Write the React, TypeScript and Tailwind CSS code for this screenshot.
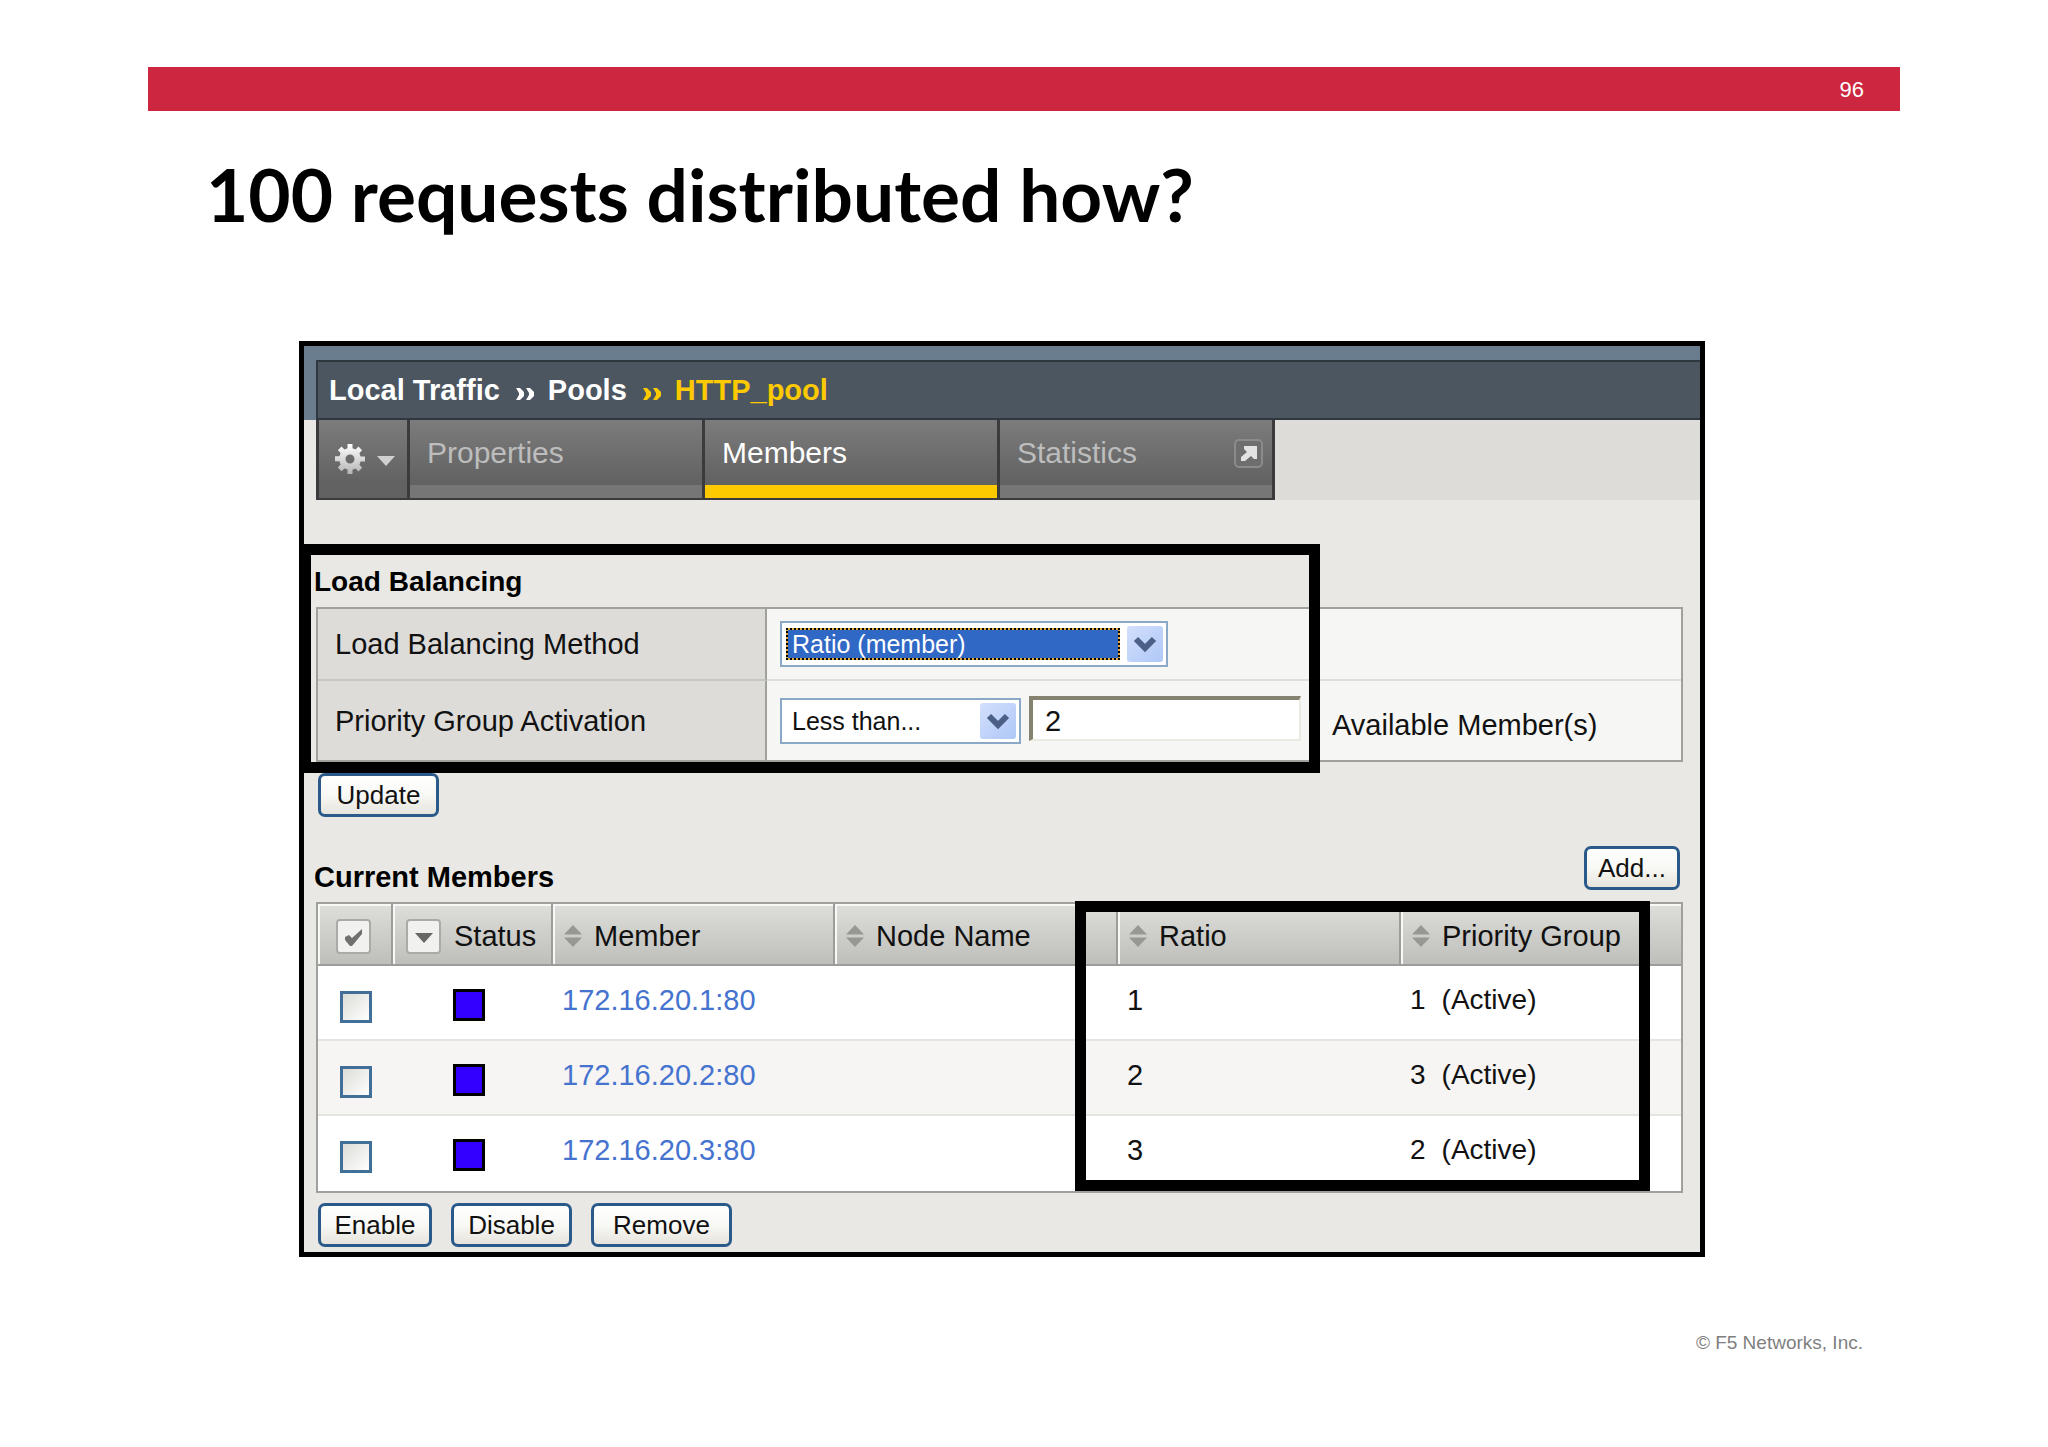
import React, { useState } from 'react';

type Member = {
  address: string;
  ratio: number;
  priority: number;
};

const members: Member[] = [
  { address: '172.16.20.1:80', ratio: 1, priority: 1 },
  { address: '172.16.20.2:80', ratio: 2, priority: 3 },
  { address: '172.16.20.3:80', ratio: 3, priority: 2 }
];

const Chevrons = ({ className }: { className: string }) => (
  <svg viewBox="0 0 18 12" className={`w-[18px] h-3 mt-2 ${className}`} aria-hidden="true">
    <path d="M0 0h4l4 4v4l-4 4H0l3-5V5zM10 0h4l4 4v4l-4 4h-4l3-5V5z" fill="currentColor" />
  </svg>
);

const GearIcon = () => (
  <svg viewBox="0 0 30 30" className="w-[30px] h-[30px]" aria-hidden="true">
    <defs>
      <linearGradient id="gear" x1="0" y1="0" x2="0" y2="1">
        <stop offset="0" stopColor="#ffffff" />
        <stop offset="1" stopColor="#b4b4b4" />
      </linearGradient>
    </defs>
    <path
      fill="url(#gear)"
      fillRule="evenodd"
      d="M12.5 0h5v4.2l3 1.200 3-2.800 3.600 3.600-2.700 3.100 1.200 3.200H30v5h-4.400l-1.200 3.200 2.700 3.100-3.600 3.600-3-2.800-3 1.200V30h-5v-4.400l-3-1.200-3 2.800-3.600-3.600 2.700-3.100-1.200-3.200H0v-5h4.400l1.200-3.200L2.900 6.200l3.600-3.600 3 2.800 3-1.200zM15 10.500a4.500 4.500 0 1 0 0 9 4.500 4.500 0 1 0 0-9z"
    />
  </svg>
);

const SortIcon = () => (
  <svg viewBox="0 0 18 22" className="w-[18px] h-[22px] shrink-0" aria-hidden="true">
    <path d="M9 0l9 9.500H0zM0 12.500h18L9 22z" fill="#979793" />
  </svg>
);

const DropArrow = () => (
  <svg viewBox="0 0 36 36" className="w-9 h-9 shrink-0" aria-hidden="true">
    <defs>
      <linearGradient id="drop" x1="0" y1="0" x2="1" y2="1">
        <stop offset="0" stopColor="#d3dffc" />
        <stop offset="1" stopColor="#aec8f7" />
      </linearGradient>
    </defs>
    <rect width="36" height="36" rx="3" fill="url(#drop)" />
    <path d="M9 13l9 9 9-9" fill="none" stroke="#4a6085" strokeWidth="6" />
  </svg>
);

const Button = ({ width, children }: { width: string; children: React.ReactNode }) => (
  <button
    type="button"
    className={`${width} h-11 rounded-[7px] border-[3px] border-[#2a5a8a] bg-linear-to-b from-white via-[#f8f8f5] to-[#e6e4dc] text-[26px] leading-8 text-[#111]`}
  >
    {children}
  </button>
);

const Tab = ({ label, active, width, icon }: { label: string; active?: boolean; width: string; icon?: React.ReactNode }) => (
  <a
    href="#"
    aria-current={active ? 'page' : undefined}
    className={`${width} flex flex-col justify-between border-r-[3px] border-b-2 border-[#3b3b3d] bg-linear-to-b from-[#7c7c7c] to-[#626262] to-80%`}
  >
    <span
      className={`flex items-center justify-between pt-[17px] pl-[17px] pr-[9px] text-[30px] leading-8 ${
        active ? 'text-white' : 'text-[#bdbdbd]'
      }`}
    >
      {label}
      {icon}
    </span>
    <span className={`h-[13px] ${active ? 'bg-[#fdca00]' : 'bg-[#767676]'}`} />
  </a>
);

const headCell = 'h-[62px] border-b-2 border-[#9c9c99] p-0 pt-1 font-normal shadow-[inset_2px_2px_0_#f8f8f6]';

export default function App() {
  const [method, setMethod] = useState('Ratio (member)');
  const [activation, setActivation] = useState('Less than...');
  const [available, setAvailable] = useState('2');

  return (
    <div className="bg-white pt-[67px] font-['Liberation_Sans',Arial,sans-serif] text-[#111]">
      <header className="mx-[148px] h-11 flex items-center justify-end bg-[#cd2641] pt-px pr-9 text-[22px] leading-8 text-white">
        96
      </header>

      <h1 className="pt-[38px] pl-[206px] font-['Lato',sans-serif] text-[73px] leading-[90px] font-bold text-black">
        100 requests distributed how?
      </h1>

      <main className="ml-[299px] mr-[343px] mt-[102px] border-[5px] border-black bg-[#e9e8e4]">
        <div className="bg-[#6a7d8e] pt-[14px] pl-3">
          <div className="flex h-[60px] items-center border-2 border-r-0 border-[#30383f] bg-[#4b5661] pl-[11px] text-[29px] leading-8 font-bold text-white">
            Local Traffic
            <Chevrons className="ml-4 mr-[14px]" />
            Pools
            <Chevrons className="ml-4 mr-[14px] text-[#fdca00]" />
            <span className="text-[#fdca00]">HTTP_pool</span>
          </div>
        </div>

        <nav className="ml-3 flex h-20 bg-[#dddcd8]">
          <button
            type="button"
            aria-label="Options"
            className="flex w-[94px] items-center gap-3 border-x-[3px] border-b-2 border-[#3b3b3d] bg-linear-to-b from-[#7c7c7c] to-[#626262] to-80% pl-4"
          >
            <GearIcon />
            <svg viewBox="0 0 18 10" className="mt-1 h-[10px] w-[18px]" aria-hidden="true">
              <path d="M0 0h18L9 10z" fill="#d0d0d0" />
            </svg>
          </button>
          <Tab label="Properties" width="w-[295px]" />
          <Tab label="Members" width="w-[295px]" active />
          <Tab
            label="Statistics"
            width="w-[275px]"
            icon={
              <svg viewBox="0 0 29 29" className="h-[29px] w-[29px]" aria-hidden="true">
                <rect x="1" y="1" width="27" height="27" rx="4" fill="#6e6e6e" stroke="#8b8b8b" strokeWidth="2" />
                <path d="M10 7h13v13h-3l-3-3-6 5H7v-4l6-5-3-3z" fill="#e2e2e2" />
              </svg>
            }
          />
        </nav>

        <section className="relative pl-3 pr-[17px] pt-[66px]">
          <h2 className="-ml-[2px] text-[28px] leading-8 font-bold text-black">Load Balancing</h2>
          <div className="mt-[9px] border-2 border-[#a0a09d] bg-[#f6f6f4] text-[29px] leading-8">
            <div className="flex h-[72px]">
              <label
                htmlFor="method"
                className="flex w-[449px] items-center border-r-2 border-b-2 border-r-[#a0a09d] border-b-[#c6c6c2] bg-[#dddcd8] pl-[17px]"
              >
                Load Balancing Method
              </label>
              <div className="flex flex-1 items-center border-b-2 border-[#dededb] pl-[13px]">
                <div className="flex h-[46px] w-[388px] items-center gap-[7px] border-2 border-[#8ba9c6] bg-white pl-1 pr-[3px]">
                  <span className="flex flex-1 bg-[#e0a845]">
                    <select
                      id="method"
                      value={method}
                      onChange={e => setMethod(e.target.value)}
                      className="h-8 w-full appearance-none border-2 border-dotted border-black bg-[#3068c6] bg-clip-padding pl-1 text-[25px] leading-7 text-white outline-none"
                    >
                      <option>Ratio (member)</option>
                      <option>Round Robin</option>
                    </select>
                  </span>
                  <DropArrow />
                </div>
              </div>
            </div>
            <div className="flex h-[79px]">
              <label
                htmlFor="activation"
                className="flex w-[449px] items-center border-r-2 border-[#a0a09d] bg-[#dddcd8] pl-[17px]"
              >
                Priority Group Activation
              </label>
              <div className="flex items-center pl-[13px]">
                <div className="flex h-[46px] w-[241px] items-center gap-[7px] border-2 border-[#8ba9c6] bg-white pl-1 pr-[3px]">
                  <select
                    id="activation"
                    value={activation}
                    onChange={e => setActivation(e.target.value)}
                    className="h-8 min-w-0 flex-1 appearance-none pl-[6px] text-[25px] leading-8 outline-none"
                  >
                    <option>Less than...</option>
                    <option>Disabled</option>
                  </select>
                  <DropArrow />
                </div>
                <input
                  id="available"
                  type="text"
                  value={available}
                  onChange={e => setAvailable(e.target.value)}
                  className="mb-1 ml-2 h-[45px] w-[272px] border-t-4 border-l-4 border-r-2 border-b-2 border-t-[#85826f] border-l-[#85826f] border-r-[#ecebe2] border-b-[#ecebe2] bg-white pt-1 pl-3 text-[29px] leading-8 outline-none"
                />
                <label htmlFor="available" className="ml-[31px] pt-2">
                  Available Member(s)
                </label>
              </div>
            </div>
          </div>
          {/* callout around the load balancing settings */}
          <div className="pointer-events-none absolute -left-1 top-[44px] -bottom-[11px] w-[1020px] border-[11px] border-black" />
        </section>

        <section className="pl-3 pr-[17px] pt-[11px] pb-[5px]">
          <div className="pl-[2px]">
            <Button width="w-[121px]">Update</Button>
          </div>

          <div className="mt-[29px] flex h-14 items-start justify-between pr-[3px]">
            <h2 className="-ml-[2px] pt-[15px] text-[29px] leading-8 font-bold text-black">Current Members</h2>
            <Button width="w-[96px]">Add...</Button>
          </div>

          <div className="relative">
            <table className="w-full table-fixed border-separate border-spacing-0 border-2 border-[#a0a09d] text-left text-[29px] leading-8">
              <thead className="bg-linear-to-b from-[#dededb] to-[#bdbdb9]">
                <tr>
                  <th className={`${headCell} w-[75px] border-r-2`}>
                    <svg viewBox="0 0 35 35" className="ml-[18px] h-[35px] w-[35px]" role="img" aria-label="Select all">
                      <rect x="1" y="1" width="33" height="33" rx="3" fill="#f1f1ef" stroke="#aaaaa7" strokeWidth="2" />
                      <path d="M9 18l4-2 3 3 10-9v5L16 27h-2l-5-6z" fill="#70706e" />
                    </svg>
                  </th>
                  <th className={`${headCell} w-[160px] border-r-2`}>
                    <div className="flex items-center gap-[13px] pl-[13px]">
                      <svg viewBox="0 0 35 35" className="h-[35px] w-[35px] shrink-0" aria-hidden="true">
                        <rect x="1" y="1" width="33" height="33" rx="3" fill="#f1f1ef" stroke="#aaaaa7" strokeWidth="2" />
                        <path d="M9 14h18l-9 10z" fill="#666664" />
                      </svg>
                      Status
                    </div>
                  </th>
                  <th className={`${headCell} w-[282px] border-r-2`}>
                    <div className="flex items-center gap-3 pl-[11px]">
                      <SortIcon />
                      Member
                    </div>
                  </th>
                  <th className={`${headCell} w-[283px] border-r-2`}>
                    <div className="flex items-center gap-3 pl-[11px]">
                      <SortIcon />
                      Node Name
                    </div>
                  </th>
                  <th className={`${headCell} w-[283px] border-r-2`}>
                    <div className="flex items-center gap-3 pl-[11px]">
                      <SortIcon />
                      Ratio
                    </div>
                  </th>
                  <th className={headCell}>
                    <div className="flex items-center gap-3 pl-[11px]">
                      <SortIcon />
                      Priority Group
                    </div>
                  </th>
                </tr>
              </thead>
              <tbody className="[&_td]:h-[75px] [&_td]:border-b-2 [&_td]:border-[#e4e4e1] [&_td]:align-top [&_tr:last-child_td]:border-b-0">
                {members.map(member => (
                  <tr key={member.address} className="bg-white even:bg-[#f6f5f3]">
                    <td className="pt-[25px] pl-[22px]">
                      <input
                        type="checkbox"
                        aria-label={`Select ${member.address}`}
                        className="block h-8 w-8 appearance-none border-[3px] border-[#416f98] bg-linear-to-br from-[#dcdcd7] to-white"
                      />
                    </td>
                    <td className="pt-[23px] pl-[60px]">
                      <div className="h-8 w-8 border-[3px] border-black bg-[#3300ff]" />
                    </td>
                    <td className="pt-[18px] pl-[9px]">
                      <a href="#" className="text-[#4573cf]">{member.address}</a>
                    </td>
                    <td />
                    <td className="pt-[18px] pl-[9px]">{member.ratio}</td>
                    <td className="pt-[18px] pl-[9px]">
                      <div className="flex gap-4 text-[28px]">
                        <span>{member.priority}</span>
                        <span>(Active)</span>
                      </div>
                    </td>
                  </tr>
                ))}
              </tbody>
            </table>
            {/* callout around the ratio and priority columns */}
            <div className="pointer-events-none absolute -top-px bottom-[2px] left-[759px] w-[575px] border-[11px] border-black" />
          </div>

          <div className="mt-[10px] flex gap-[19px] pl-[2px]">
            <Button width="w-[114px]">Enable</Button>
            <Button width="w-[121px]">Disable</Button>
            <Button width="w-[141px]">Remove</Button>
          </div>
        </section>
      </main>

      <footer className="pt-[70px] pr-[185px] text-right text-[19px] leading-8 text-[#7f7f7f]">© F5 Networks, Inc.</footer>
    </div>
  );
}
